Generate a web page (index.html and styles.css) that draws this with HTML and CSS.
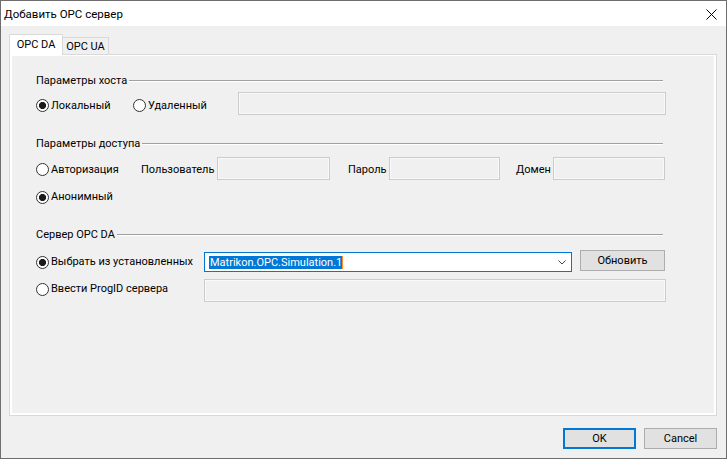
FILE: index.html
```html
<!DOCTYPE html>
<html lang="ru">
<head>
<meta charset="utf-8">
<title>Добавить OPC сервер</title>
<link rel="stylesheet" href="styles.css">
</head>
<body>
<div class="window">
  <div class="titlebar">
    <span class="title">Добавить OPC сервер</span>
    <span class="close"><svg width="11" height="11" viewBox="0 0 11 11"><path d="M0.5 0.5 L10.5 10.5 M10.5 0.5 L0.5 10.5" stroke="#000" stroke-width="1" fill="none"/></svg></span>
  </div>
  <div class="body">
    <div class="tabstrip">
      <div class="tab active">OPC DA</div>
      <div class="tab">OPC UA</div>
    </div>
    <div class="panel">
      <div class="page">
        <div class="group-head head-host"><span>Параметры хоста</span><span class="rule"></span></div>
        <div class="row row-host">
          <label class="radio w-local"><span class="dot checked"></span>Локальный</label>
          <label class="radio w-remote"><span class="dot"></span>Удаленный</label>
          <span class="field w-host"></span>
        </div>

        <div class="group-head head-access"><span>Параметры доступа</span><span class="rule"></span></div>
        <div class="row row-auth">
          <label class="radio w-auth"><span class="dot"></span>Авторизация</label>
          <span class="lbl w-user">Пользователь</span>
          <span class="field w-f1"></span>
          <span class="lbl w-pass">Пароль</span>
          <span class="field w-f2"></span>
          <span class="lbl w-domain">Домен</span>
          <span class="field w-f3"></span>
        </div>
        <div class="row row-anon">
          <label class="radio"><span class="dot checked"></span>Анонимный</label>
        </div>

        <div class="group-head head-server"><span>Сервер OPC DA</span><span class="rule"></span></div>
        <div class="row row-select">
          <label class="radio w-sel"><span class="dot checked"></span>Выбрать из установленных</label>
          <div class="combo">
            <span class="combo-text"><span class="sel">Matrikon.OPC.Simulation.1</span><span class="caret"></span></span>
            <svg class="chev" width="8" height="5" viewBox="0 0 8 5"><path d="M0.5 0.5 L4 4 L7.5 0.5" stroke="#444" stroke-width="1" fill="none"/></svg>
          </div>
          <span class="btn refresh">Обновить</span>
        </div>
        <div class="row row-progid">
          <label class="radio w-sel"><span class="dot"></span>Ввести ProgID сервера</label>
          <span class="field w-prog"></span>
        </div>
      </div>
    </div>
    <div class="footer">
      <span class="btn default">OK</span>
      <span class="btn">Cancel</span>
    </div>
  </div>
</div>
</body>
</html>
```

FILE: styles.css
```css
* { box-sizing: border-box; }
html, body { margin: 0; padding: 0; }
body {
  width: 727px;
  height: 459px;
  background: #f0f0f0;
  font-family: Roboto, "Noto Sans", "Liberation Sans", sans-serif;
  font-size: 11px;
  color: #000;
  overflow: hidden;
}
.window {
  width: 727px;
  height: 459px;
  border: 1px solid #6e6e6e;
  background: #f0f0f0;
  display: flex;
  flex-direction: column;
}
.titlebar {
  height: 25px;
  background: #fff;
  display: flex;
  align-items: center;
  justify-content: space-between;
  padding-left: 3px;
  padding-right: 9px;
  flex: none;
}
.title { font-size: 11.5px; line-height: 16px; }
.close { display: flex; width: 11px; height: 11px; margin-top: 1px; }

.body {
  padding: 8px 9px 0 8px;
  display: flex;
  flex-direction: column;
}
.tabstrip {
  display: flex;
  align-items: flex-end;
  height: 20px;
}
.tab {
  height: 17px;
  border: 1px solid #d9d9d9;
  border-bottom: none;
  background: #f0f0f0;
  display: flex;
  align-items: center;
  justify-content: center;
  line-height: 14px;
  width: 47px;
  margin-left: -1px;
  padding-top: 1px;
}
.tab.active {
  position: relative;
  z-index: 1;
  height: 21px;
  width: 54px;
  margin-left: 0;
  margin-bottom: -1px;
  background: #fff;
  padding-top: 0;
}
.panel {
  width: 708px;
  height: 362px;
  border: 1px solid #d9d9d9;
  background: #fff;
  padding: 1px 2px 2px 2px;
}
.page {
  height: 100%;
  background: #f0f0f0;
  padding: 16px 0 0 24px;
  display: flex;
  flex-direction: column;
}
.group-head {
  display: flex;
  align-items: center;
  height: 16px;
  width: 627px;
  line-height: 16px;
}
.group-head > span:first-child { padding-top: 1px; }
.group-head .rule {
  flex: 1;
  height: 2px;
  border-top: 1px solid #a0a0a0;
  border-bottom: 1px solid #fff;
  margin-left: 2px;
  margin-top: 1px;
}
.head-access { margin-top: 20px; }
.head-server { margin-top: 22px; }

.row {
  display: flex;
  align-items: center;
  width: 630px;
}
.row-host { margin-top: 4px; height: 23px; }
.row-auth { margin-top: 6px; height: 23px; }
.row-anon { margin-top: 8px; height: 16px; }
.row-select { margin-top: 8px; height: 22px; }
.row-progid { margin-top: 7px; height: 23px; align-items: flex-start; }

.radio {
  display: flex;
  align-items: center;
  gap: 2px;
  line-height: 16px;
  white-space: nowrap;
  margin-top: 2px;
}
.dot {
  width: 13px;
  height: 13px;
  border: 1px solid #333;
  border-radius: 50%;
  background: #fff;
  flex: none;
}
.dot.checked {
  background: radial-gradient(circle, #1a1a1a 0, #1a1a1a 3.2px, #fff 3.9px);
}
.row-host .radio { margin-top: 4px; }
.row-progid .radio { margin-top: 2px; }
.w-local { width: 97px; }
.w-remote { width: 105px; }
.w-auth { width: 105px; }
.w-sel { width: 168px; }
.lbl { white-space: nowrap; line-height: 16px; margin-top: 2px; }
.w-user { width: 76px; }
.w-pass { width: 41px; margin-left: 18px; }
.w-domain { width: 37px; margin-left: 16px; }

.field {
  display: block;
  height: 23px;
  border: 1px solid #cccccc;
  background: #f0f0f0;
  box-shadow: inset 0 0 0 1px #f9f9f9;
}
.w-host { width: 428px; }
.w-f1 { width: 113px; }
.w-f2 { width: 111px; }
.w-f3 { width: 112px; }
.w-prog { width: 462px; }

.combo {
  width: 368px;
  height: 20px;
  margin-top: 2px;
  border: 1px solid #0078d7;
  background: #fff;
  display: flex;
  align-items: center;
  justify-content: space-between;
  padding: 0 5px 0 4px;
}
.combo-text { display: flex; align-items: center; }
.sel {
  background: #0078d7;
  color: #fff;
  line-height: 13px;
  height: 13px;
  padding: 0 0 0 1px;
}
.caret { width: 1px; height: 13px; background: #ff8a2a; }
.chev { display: block; margin-top: 1px; }

.btn {
  display: flex;
  align-items: center;
  justify-content: center;
  background: #e1e1e1;
  border: 1px solid #adadad;
  height: 21px;
  line-height: 14px;
}
.refresh { width: 85px; margin-left: 8px; align-self: flex-start; }
.footer {
  margin-top: 12px;
  display: flex;
  justify-content: flex-end;
  gap: 8px;
}
.footer .btn { width: 73px; }
.footer .btn.default { border: 2px solid #0078d7; }
```
